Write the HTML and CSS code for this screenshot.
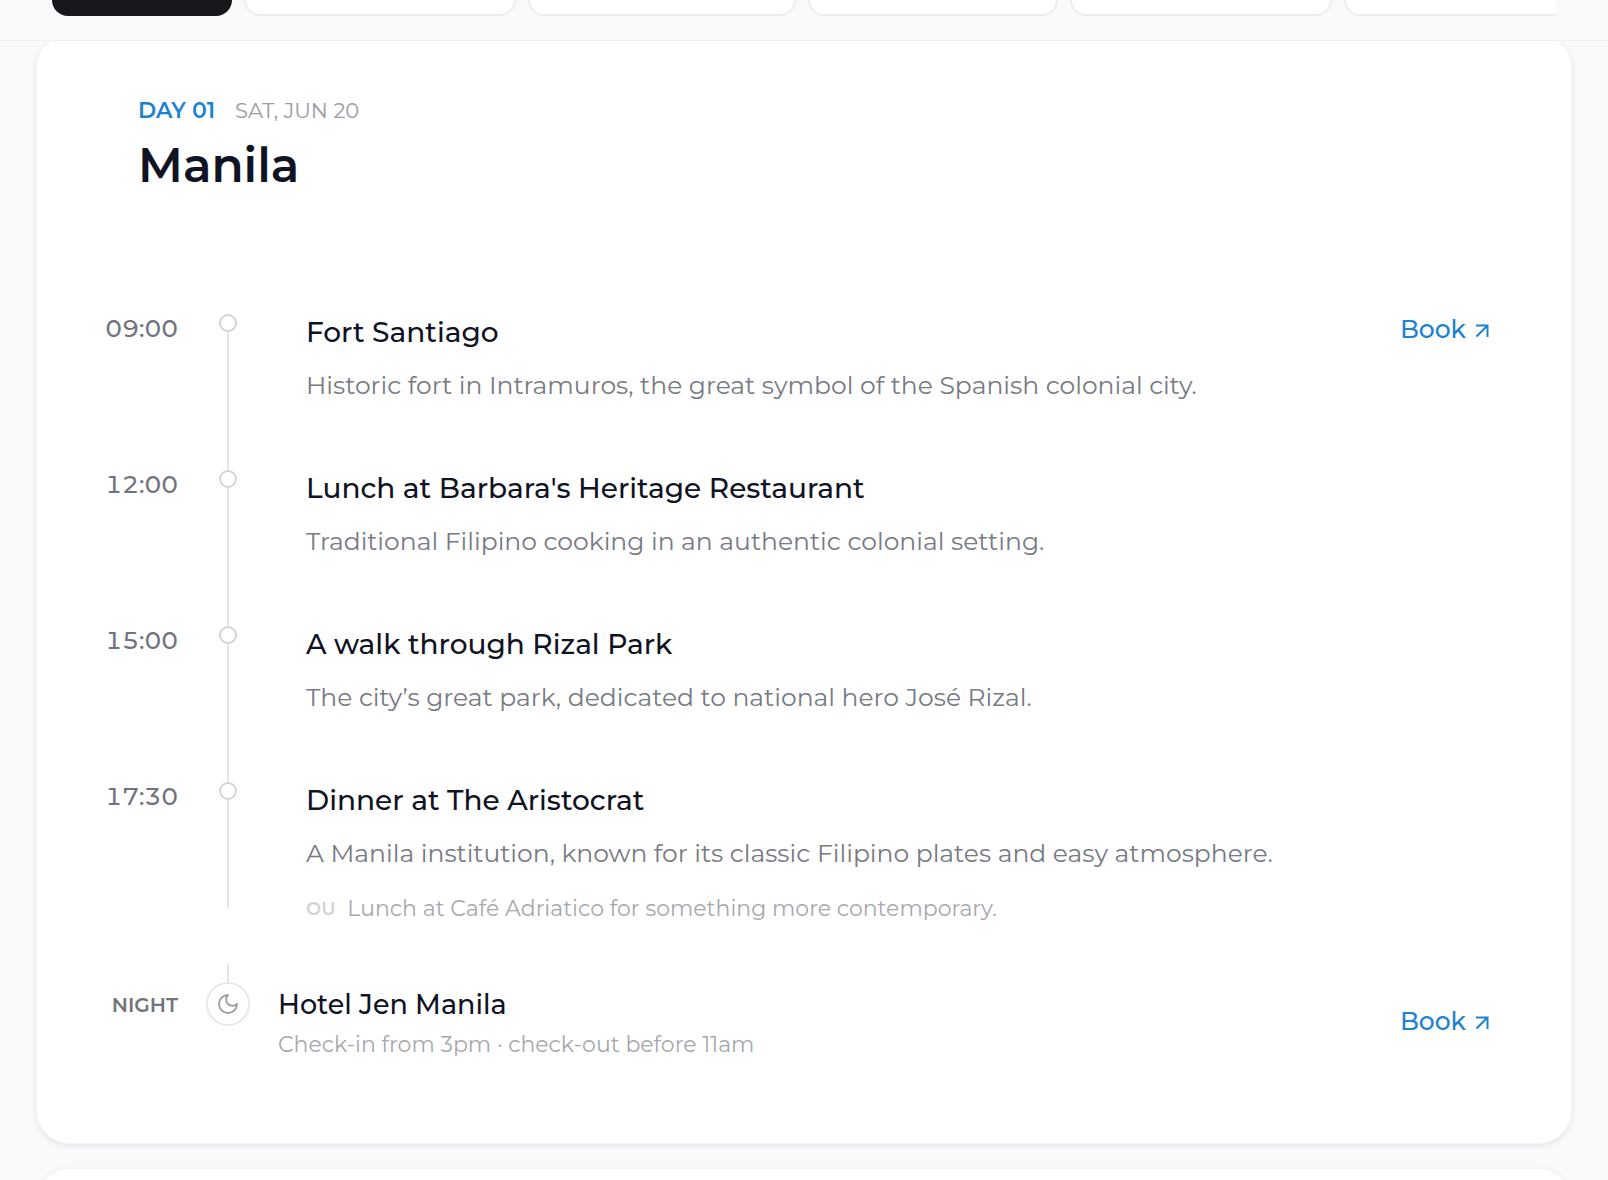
FILE: index.html
```html
<!DOCTYPE html>
<html lang="en">
<head>
<meta charset="utf-8">
<meta name="viewport" content="width=device-width, initial-scale=1">
<title>Manila itinerary</title>
<link rel="stylesheet" href="styles.css">
</head>
<body>
<svg class="sprite" aria-hidden="true">
  <symbol id="arrow" viewBox="0 0 14 14"><path d="M1.500 12.500 12.500 1.500M1 1.500h11.500V13" fill="none" stroke="currentColor" stroke-width="2"/></symbol>
  <symbol id="moon" viewBox="0 0 24 24"><path d="M12 3a6 6 0 0 0 9 9 9 9 0 1 1-9-9Z" fill="none" stroke="currentColor" stroke-width="1.800" stroke-linecap="round" stroke-linejoin="round"/></symbol>
</svg>
<header class="days-bar">
  <nav class="days" aria-label="Days">
    <button class="chip chip-active" aria-label="All days"></button>
    <button class="chip chip-xl" aria-label="Day 1"></button>
    <button class="chip chip-lg" aria-label="Day 2"></button>
    <button class="chip chip-sm" aria-label="Day 3"></button>
    <button class="chip chip-md" aria-label="Day 4"></button>
    <button class="chip chip-md" aria-label="Day 5"></button>
  </nav>
</header>
<main class="itinerary">
  <article class="card">
    <header class="card-head">
      <p class="eyebrow"><span class="day">DAY 01</span><time class="date">SAT, JUN 20</time></p>
      <h1 class="city">Manila</h1>
    </header>
    <ol class="stops">
      <li class="stop">
        <time class="hour">09:00</time>
        <span class="rail"><span class="dot"></span></span>
        <div class="info">
          <h2 class="title">Fort Santiago</h2>
          <p class="desc">Historic fort in Intramuros, the great symbol of the Spanish colonial city.</p>
        </div>
        <a class="book" href="#">Book<svg class="arrow" aria-hidden="true"><use href="#arrow"/></svg></a>
      </li>
      <li class="stop">
        <time class="hour">12:00</time>
        <span class="rail"><span class="dot"></span></span>
        <div class="info">
          <h2 class="title">Lunch at Barbara's Heritage Restaurant</h2>
          <p class="desc">Traditional Filipino cooking in an authentic colonial setting.</p>
        </div>
      </li>
      <li class="stop">
        <time class="hour">15:00</time>
        <span class="rail"><span class="dot"></span></span>
        <div class="info">
          <h2 class="title">A walk through Rizal Park</h2>
          <p class="desc">The city’s great park, dedicated to national hero José Rizal.</p>
        </div>
      </li>
      <li class="stop stop-last">
        <time class="hour">17:30</time>
        <span class="rail"><span class="dot"></span></span>
        <div class="info">
          <h2 class="title">Dinner at The Aristocrat</h2>
          <p class="desc">A Manila institution, known for its classic Filipino plates and easy atmosphere.</p>
          <p class="alt"><span class="or">OU</span><span>Lunch at Café Adriatico for something more contemporary.</span></p>
        </div>
      </li>
    </ol>
    <section class="night">
      <span class="night-label">NIGHT</span>
      <span class="night-mark"><span class="stem"></span><span class="moon"><svg class="moon-icon" aria-hidden="true"><use href="#moon"/></svg></span></span>
      <div class="hotel">
        <h2 class="hotel-name">Hotel Jen Manila</h2>
        <p class="hotel-note">Check-in from 3pm · check-out before 11am</p>
      </div>
      <a class="book night-book" href="#">Book<svg class="arrow" aria-hidden="true"><use href="#arrow"/></svg></a>
    </section>
  </article>
  <article class="card card-next"></article>
</main>
</body>
</html>
```
FILE: styles.css
```css
* { box-sizing: border-box; }

body {
  margin: 0;
  height: 100vh;
  overflow: hidden;
  background: #f9fafc;
  color: #101323;
  font-family: Montserrat, Inter, sans-serif;
}

h1, h2, p, ol { margin: 0; padding: 0; }
ol { list-style: none; }
.sprite { display: none; }

.days-bar {
  position: sticky;
  top: 0;
  z-index: 1;
  padding: 0 52px 24px;
  border-bottom: 1px solid #f1f2f4;
  background: #f9fafc;
}
.days {
  display: flex;
  gap: 12px;
  overflow: hidden;
}
.chip {
  flex: none;
  height: 16px;
  padding: 0;
  border: 2px solid #ededed;
  border-top: 0;
  border-radius: 0 0 16px 16px;
  background: #fff;
}
.chip-active { width: 180px; border-color: #18171c; background: #18171c; }
.chip-sm { width: 250px; }
.chip-md { width: 262px; }
.chip-lg { width: 268px; }
.chip-xl { width: 272px; }

.itinerary {
  display: flex;
  flex-direction: column;
  gap: 26px;
  margin-top: -6px;
  padding: 0 37px;
}
.card {
  padding: 62px 82px 83px 65px;
  border-radius: 32px;
  background: #fff;
  box-shadow: 0 0 0 1px #f3f4f5, 0 2px 6px rgba(20, 25, 35, 0.120);
}
.card-next { min-height: 200px; }

.card-head { padding: 0 36px 118px; }
.eyebrow {
  display: flex;
  gap: 20px;
  font-size: 21px;
  line-height: 28px;
}
.day { color: #1e82d2; font-size: 22px; font-weight: 600; }
.date { color: #9a9ca3; }
.city {
  margin-top: 11px;
  font-size: 47px;
  font-weight: 600;
  line-height: 60px;
}

.stop, .night {
  display: grid;
  grid-template-columns: 76px 44px 1fr auto;
  column-gap: 28px;
}
.hour {
  color: #71747e;
  font-size: 24px;
  font-weight: 500;
  font-variant-numeric: tabular-nums;
  line-height: 30px;
  text-align: right;
}
.rail {
  display: flex;
  justify-content: center;
  background: linear-gradient(#e5e5e6, #e5e5e6) center / 2px 100% no-repeat;
}
.dot {
  width: 18px;
  height: 18px;
  border: 2px solid #d4d4d6;
  border-radius: 50%;
  background: #fff;
}
.info { padding: 0 0 67px 28px; }
.title {
  font-size: 28px;
  font-weight: 500;
  line-height: 36px;
}
.desc {
  margin-top: 17px;
  color: #777a83;
  font-size: 25px;
  line-height: 36px;
}
.stop-last .info { padding-bottom: 0; }
.stop-last .rail { margin-bottom: 16px; }
.alt {
  display: flex;
  gap: 12px;
  margin-top: 23px;
  color: #a6a8ad;
  font-size: 22px;
  line-height: 30px;
}
.or { color: #d2d3d6; font-size: 18px; font-weight: 600; }
.book {
  display: flex;
  align-items: center;
  align-self: start;
  gap: 9px;
  color: #1e82d2;
  font-size: 25px;
  font-weight: 500;
  line-height: 30px;
  text-decoration: none;
}
.arrow { width: 14px; height: 14px; margin-top: 4px; }

.night { margin-top: 40px; }
.night-label {
  padding-top: 25px;
  color: #71747e;
  font-size: 20px;
  font-weight: 600;
  line-height: 32px;
  text-align: right;
}
.night-mark {
  display: flex;
  flex-direction: column;
  align-items: center;
}
.stem { width: 2px; height: 18px; background: #e5e5e6; }
.moon {
  display: grid;
  place-items: center;
  width: 44px;
  height: 44px;
  border: 2px solid #e8e8ea;
  border-radius: 50%;
  color: #9a9ca3;
}
.moon-icon { width: 24px; height: 24px; }
.hotel { padding-top: 23px; }
.hotel-name {
  font-size: 27px;
  font-weight: 500;
  line-height: 36px;
}
.hotel-note {
  margin-top: 7px;
  color: #a6a8ad;
  font-size: 22px;
  line-height: 30px;
}
.night-book { margin-top: 42px; }
```
